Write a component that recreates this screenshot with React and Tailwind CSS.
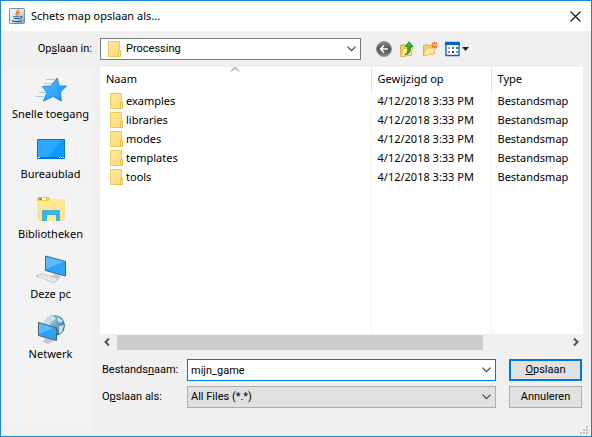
const files = ["examples", "libraries", "modes", "templates", "tools"];

function Folder() {
  return (
    <svg width="16" height="16" viewBox="0 0 16 16" className="shrink-0" aria-hidden="true">
      <defs>
        <linearGradient id="folder" x1="0" y1="0" x2="1" y2="1">
          <stop stopColor="#ffe795" />
          <stop offset="1" stopColor="#fddb7c" />
        </linearGradient>
      </defs>
      <path d="M.5.5h11v15H.5z" fill="url(#folder)" stroke="#ecc95b" />
      <path d="M10.500 9.500h2v6h-2z" fill="#ffe795" stroke="#e6bf45" />
    </svg>
  );
}

function Chevron({ className }) {
  return (
    <svg width="9" height="6" viewBox="0 0 9 6" fill="none" stroke="#444" strokeWidth="1.200" className={className} aria-hidden="true">
      <path d="M.5.700l4 4 4-4" />
    </svg>
  );
}

function JavaIcon() {
  return (
    <svg width="16" height="16" viewBox="0 0 16 16" fill="none" aria-hidden="true">
      <defs>
        <linearGradient id="java" x1="0" y1="0" x2="1" y2="1">
          <stop stopColor="#f8fafb" />
          <stop offset=".5" stopColor="#dbe5ec" />
          <stop offset="1" stopColor="#7f9db5" />
        </linearGradient>
      </defs>
      <rect x=".5" y=".5" width="15" height="15" rx="1" fill="url(#java)" stroke="#7b8e9c" />
      <path d="M9 1.500c1 2-3.500 3-1.200 6M10.800 4c-2.300 1-2 2-1.300 3.300" stroke="#e8762d" strokeWidth="1.400" />
      <path d="M4 8.700h6.500M4.800 10.500h5.400M11 8.300c3-.5 2 2-.5 2.500M3 12.500c2 1.500 8 1.500 10 0" stroke="#2f5f8a" strokeWidth="1.100" />
    </svg>
  );
}

function Star() {
  return (
    <svg width="32" height="32" viewBox="0 0 32 32" aria-hidden="true">
      <defs>
        <linearGradient id="star" x1="0" y1="0" x2="1" y2="1">
          <stop stopColor="#5cc0ff" />
          <stop offset="1" stopColor="#0d94f2" />
        </linearGradient>
      </defs>
      <path d="M11 6.500h9M9 10.500h10M4 19.500h9M1 23.500h10" stroke="#9ccdf0" />
      <path d="M22.300 5l1.700 8h7.500l-6 6 .8 9-8.300-4.500L8.500 28l3.500-8-4.500-6.500 8.300-.5z" fill="url(#star)" stroke="#1580cf" strokeWidth=".9" />
    </svg>
  );
}

function Desktop() {
  return (
    <svg width="32" height="32" viewBox="0 0 32 32" aria-hidden="true">
      <path d="M2.500 6.500h27v19h-27z" fill="#0d9bff" stroke="#0873bd" />
      <path d="M3 7h24L13 24H3z" fill="#2ba8ff" />
      <path d="M2 24.500h28" stroke="#0873bd" />
      <path d="M3 24.500h2M24 24.500h1M26 24.500h1M28 24.500h1" stroke="#fff" />
    </svg>
  );
}

function Libraries() {
  return (
    <svg width="32" height="32" viewBox="0 0 32 32" aria-hidden="true">
      <path d="M2 5l1-1h11l1 2h14l1 1v20l-1 1H3l-1-1z" fill="#ffe695" />
      <path d="M2 5l1-1h11l1 2-1 2H2z" fill="#fbc934" />
      <path d="M4 5h7v2H4z" fill="#fff" />
      <path d="M4 5h3v2H4z" fill="#38a9a1" />
      <path d="M7 28V18l1-1h16l1 1v10h-4v-6h-9v6z" fill="#3db4e7" />
    </svg>
  );
}

function Computer() {
  return (
    <svg width="32" height="32" viewBox="0 0 32 32" aria-hidden="true">
      <path d="M19 19l6 2v2l2 1-6 2-6-2 4-2z" fill="#c3cbd1" />
      <path d="M10.500 3l20 5.500v14.500l-20-5.500z" fill="#2ba1f8" stroke="#51616d" />
      <path d="M11 3.800l18 5-18 7.500z" fill="#5cb9ff" />
      <path d="M1 23l6-2.500 17 5.500-5 4z" fill="#d9dde0" stroke="#aab1b7" strokeWidth=".6" />
      <path d="M4 23.500l15 4.500M7 22l14 4.500" stroke="#fff" strokeDasharray="2 1" />
    </svg>
  );
}

function Network() {
  return (
    <svg width="32" height="32" viewBox="0 0 32 32" aria-hidden="true">
      <defs>
        <radialGradient id="globe" cx=".4" cy=".3" r=".75">
          <stop stopColor="#8fc6dc" />
          <stop offset="1" stopColor="#2f7092" />
        </radialGradient>
      </defs>
      <circle cx="19.500" cy="12.500" r="10.500" fill="url(#globe)" />
      <path d="M10 9c2-5 6-7 9-6l2 3-4 2-2 4-5 1zM23 4l5 4-3 2-3-3zM24 13l5-1-2 7-3 2z" fill="#c2e2ec" />
      <path d="M10 25l6 1 3 2-6 3-5-2z" fill="#c3cbd1" />
      <path d="M3.500 9.500l18 5.500v12.500l-18-5z" fill="#2ba1f8" stroke="#51616d" />
      <path d="M4 10.300l15 4.700-15 6z" fill="#5cb9ff" />
    </svg>
  );
}

const places = [
  ["Snelle toegang", Star],
  ["Bureaublad", Desktop],
  ["Bibliotheken", Libraries],
  ["Deze pc", Computer],
  ["Netwerk", Network],
];

export default function App() {
  return (
    <div className="relative flex min-h-screen flex-col border border-[#1883d7] bg-[#f0f0f0] font-['Noto_Sans','Open_Sans',sans-serif] text-[11px] leading-4 text-black">
      <header className="flex h-[30px] items-center bg-white pr-2.5 pl-2">
        <JavaIcon />
        <h1 className="ml-1.5 flex-1">Schets map opslaan als...</h1>
        <button aria-label="Sluiten">
          <svg width="11" height="11" viewBox="0 0 11 11" stroke="#111" strokeWidth="1.100" aria-hidden="true">
            <path d="M.5.5l10 10M10.500.5l-10 10" />
          </svg>
        </button>
      </header>

      <div className="flex items-center pt-[7px] pb-[7px] font-[Roboto,'Noto_Sans',sans-serif]">
        <label htmlFor="dir" className="w-[99px] pr-2 text-right">
          Op<u>s</u>laan in:
        </label>
        <div className="relative flex w-[261px] items-center border border-[#7a7a7a] bg-white">
          <span className="absolute left-[7px]"><Folder /></span>
          <select id="dir" className="h-5 w-full appearance-none pl-[25px]">
            <option>Processing</option>
          </select>
          <Chevron className="pointer-events-none absolute right-1" />
        </div>
        <div className="ml-[15px] flex items-center gap-[7px]">
          <button aria-label="Terug">
            <svg width="16" height="16" viewBox="0 0 16 16" fill="none" aria-hidden="true">
              <defs>
                <linearGradient id="back" x1="0" y1="0" x2="0" y2="1">
                  <stop stopColor="#8e8e8e" />
                  <stop offset=".5" stopColor="#4c4c4c" />
                  <stop offset="1" stopColor="#8a8a8a" />
                </linearGradient>
              </defs>
              <circle cx="8" cy="8" r="7.400" fill="url(#back)" stroke="#8c8c8c" />
              <path d="M12 8H5M8 4.500L4.500 8 8 11.500" stroke="#fff" strokeWidth="1.700" />
            </svg>
          </button>
          <button aria-label="Bovenliggende map">
            <svg width="16" height="16" viewBox="0 0 16 16" aria-hidden="true">
              <path d="M1.500 4.500l4-1 1 1.500 6-1v10l-10.500 1.500z" fill="#f3d063" stroke="#d0a42f" />
              <path d="M4 8l10-1.500-2 7.500-10.500 1.500z" fill="#ffeb98" stroke="#d9b03c" strokeWidth=".7" />
              <path d="M6 13.500c3-1.500 3-4 2.800-8H6.300L10 .700l4 4.800h-2.500c.5 5-1.500 8-5.500 8z" fill="#3cb52f" stroke="#14791a" strokeWidth=".8" />
            </svg>
          </button>
          <button aria-label="Nieuwe map">
            <svg width="16" height="16" viewBox="0 0 16 16" aria-hidden="true">
              <path d="M1.500 4.500l4-1 1 1.500 6-1v8.500l-11 2z" fill="#f3d063" stroke="#dcae3e" />
              <path d="M4 7.500l10-1-2.500 6.500-10 1.500z" fill="#ffeb98" stroke="#e0b74a" strokeWidth=".7" />
              <path d="M12.500.5v7M9 4h7M10 1.500l5 5M15 1.500l-5 5" stroke="#f0642a" strokeWidth="1.100" />
              <circle cx="12.500" cy="4" r="1.200" fill="#ffd27a" />
            </svg>
          </button>
          <button aria-label="Weergave">
            <svg width="25" height="16" viewBox="0 0 25 16" aria-hidden="true">
              <path d="M1 1.500h13v13H1z" fill="#fff" stroke="#0069c8" strokeWidth="1.400" />
              <path d="M0 2.500h15" stroke="#0069c8" strokeWidth="3" />
              <path d="M3 6h2v2H3z" fill="#a9a3bb" />
              <path d="M7 6h2v2H7z" fill="#4c7fa8" />
              <path d="M11 6h2v2h-2z" fill="#218d36" />
              <path d="M3 10h2v2H3z" fill="#e76e3c" />
              <path d="M7 10h2v2H7z" fill="#123c91" />
              <path d="M11 10h2v2h-2z" fill="#c59b20" />
              <path d="M17 6h7l-3.500 4z" fill="#222" />
            </svg>
          </button>
        </div>
      </div>

      <div className="flex flex-1 pr-2 pb-[5px] pl-1.5">
        <nav className="flex w-[87px] shrink-0 flex-col gap-[11px] bg-[#f3f3f3] pt-1.5">
          {places.map(([name, Icon]) => (
            <button key={name} className="flex flex-col items-center gap-px whitespace-nowrap">
              <Icon />
              <span>{name}</span>
            </button>
          ))}
        </nav>

        <main className="ml-1.5 flex min-w-0 flex-1 flex-col">
          <div className="flex flex-1 flex-col bg-white">
            <table className="h-full w-full flex-1 table-fixed text-left">
              <colgroup>
                <col />
                <col className="w-[120px]" />
                <col className="w-[92px]" />
              </colgroup>
              <thead>
                <tr className="h-6">
                  <th className="relative pl-1.5 font-normal">
                    Naam
                    <svg width="9" height="5" viewBox="0 0 9 5" fill="none" stroke="#666" className="absolute top-0 left-1/2 -translate-x-1/2" aria-hidden="true">
                      <path d="M.5 4.500l4-4 4 4" />
                    </svg>
                  </th>
                  <th className="border-l border-[#e0e0e0] pl-1.5 font-normal">Gewijzigd op</th>
                  <th className="border-l border-[#e0e0e0] pl-1.5 font-normal">Type</th>
                </tr>
              </thead>
              <tbody>
                {files.map((name) => (
                  <tr key={name} className="h-[19px]">
                    <td className="pl-2.5">
                      <span className="flex items-center"><Folder />{name}</span>
                    </td>
                    <td className="border-l border-[#ecf4fb] pl-1.5">4/12/2018 3:33 PM</td>
                    <td className="border-l border-[#ecf4fb] pl-1.5">Bestandsmap</td>
                  </tr>
                ))}
                <tr>
                  <td />
                  <td className="border-l border-[#ecf4fb]" />
                  <td className="border-l border-[#ecf4fb]" />
                </tr>
              </tbody>
            </table>
          </div>

          <div className="flex h-4 items-center justify-between pr-1 pl-1">
            <svg width="6" height="8" viewBox="0 0 6 8" fill="none" stroke="#505050" strokeWidth="2" aria-hidden="true">
              <path d="M5 .5L1.500 4 5 7.500" />
            </svg>
            <div className="mr-[90px] ml-[7px] h-[15px] flex-1 bg-[#cdcdcd]" />
            <svg width="6" height="8" viewBox="0 0 6 8" fill="none" stroke="#505050" strokeWidth="2" aria-hidden="true">
              <path d="M1 .5L4.500 4 1 7.500" />
            </svg>
          </div>

          <form className="grid grid-cols-[87px_minmax(0,1fr)_74px] items-center gap-y-[5px] pt-[9px] pb-[23px] font-[Roboto,'Noto_Sans',sans-serif]" onSubmit={(e) => e.preventDefault()}>
            <label htmlFor="name" className="pl-0.5">Bestands<u>n</u>aam:</label>
            <div className="relative mr-[13px] flex items-center border border-[#0078d7] bg-white">
              <input id="name" defaultValue="mijn_game" className="h-5 w-full pl-[3px] outline-none" />
              <Chevron className="pointer-events-none absolute right-1" />
            </div>
            <button type="submit" className="mr-px h-[22px] border-2 border-[#0078d7] bg-[#e1e1e1] leading-4"><u>O</u>pslaan</button>
            <label htmlFor="type" className="pl-0.5">O<u>p</u>slaan als:</label>
            <div className="relative mr-[13px] flex items-center border border-[#adadad] bg-[#e1e1e1]">
              <select id="type" className="h-5 w-full appearance-none pl-[3px]">
                <option>All Files (*.*)</option>
              </select>
              <Chevron className="pointer-events-none absolute right-1" />
            </div>
            <button type="button" className="mr-px h-[22px] border border-[#adadad] bg-[#e1e1e1] leading-4">Annuleren</button>
          </form>
        </main>
      </div>

      <svg width="8" height="8" viewBox="0 0 8 8" fill="#bfbfbf" className="absolute right-[3px] bottom-0.5" aria-hidden="true">
        <path d="M6 0h2v2H6zM3 3h2v2H3zM6 3h2v2H6zM0 6h2v2H0zM3 6h2v2H3zM6 6h2v2H6z" />
      </svg>
    </div>
  );
}
